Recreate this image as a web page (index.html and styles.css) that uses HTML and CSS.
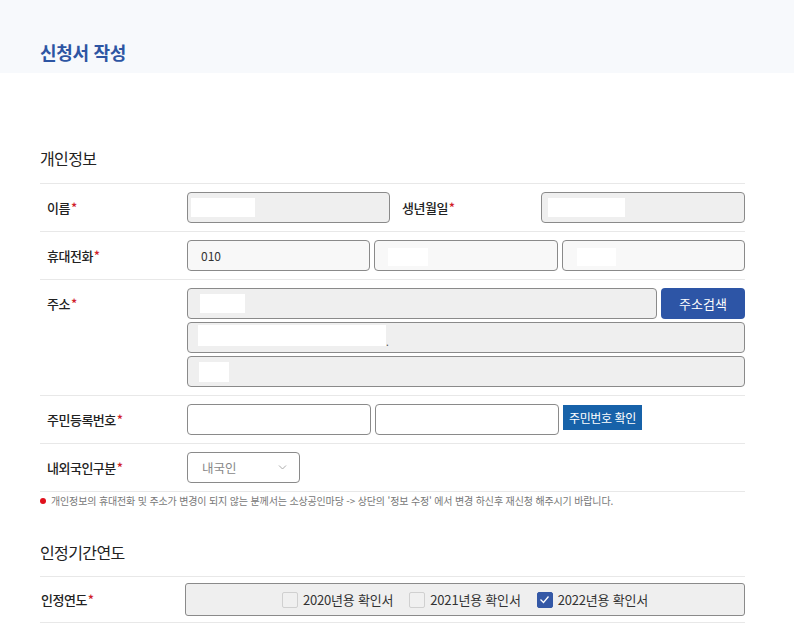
FILE: index.html
```html
<!DOCTYPE html>
<html lang="ko">
<head>
  <meta charset="UTF-8">
  <title>신청서 작성</title>
  <link rel="stylesheet" href="styles.css">
</head>
<body>

<div class="page-head">
  <h1 class="page-title">신청서 작성</h1>
</div>

<div class="content">
  <h2 class="section-title first">개인정보</h2>

  <div class="form-table">
    <div class="form-row">
      <div class="label">이름<span class="req">*</span></div>
      <div class="field">
        <div class="input disabled name-input"><span class="mask mask-name"></span></div>
        <div class="label label-inline">생년월일<span class="req">*</span></div>
        <div class="input disabled grow"><span class="mask mask-birth"></span></div>
      </div>
    </div>

    <div class="form-row">
      <div class="label">휴대전화<span class="req">*</span></div>
      <div class="field thirds">
        <div class="input light">010</div>
        <div class="input light"><span class="mask mask-phone2"></span></div>
        <div class="input light"><span class="mask mask-phone3"></span></div>
      </div>
    </div>

    <div class="form-row">
      <div class="label">주소<span class="req">*</span></div>
      <div class="field stack">
        <div class="addr-line">
          <div class="input disabled grow"><span class="mask mask-zip"></span></div>
          <button class="btn btn-addr">주소검색</button>
        </div>
        <div class="input disabled"><span class="mask mask-addr1"></span><span class="dot">.</span></div>
        <div class="input disabled"><span class="mask mask-addr2"></span></div>
      </div>
    </div>

    <div class="form-row">
      <div class="label">주민등록번호<span class="req">*</span></div>
      <div class="field thirds top">
        <div class="input white"></div>
        <div class="input white"></div>
        <div class="btn-cell"><button class="btn btn-jumin">주민번호 확인</button></div>
      </div>
    </div>

    <div class="form-row">
      <div class="label">내외국인구분<span class="req">*</span></div>
      <div class="field">
        <div class="select">
          <span>내국인</span>
          <svg width="9" height="5" viewBox="0 0 9 5"><path d="M1 0.5l3.5 3.5 3.5-3.5" fill="none" stroke="#aaa" stroke-width="1"/></svg>
        </div>
      </div>
    </div>
  </div>

  <p class="notice"><span class="bullet"></span>개인정보의 휴대전화 및 주소가 변경이 되지 않는 분께서는 소상공인마당 -&gt; 상단의 '정보 수정' 에서 변경 하신후 재신청 해주시기 바랍니다.</p>

  <h2 class="section-title">인정기간연도</h2>

  <div class="form-table">
    <div class="form-row year-row">
      <div class="label label-year">인정연도<span class="req">*</span></div>
      <div class="year-box">
        <label class="check"><span class="box"></span>2020년용 확인서</label>
        <label class="check"><span class="box"></span>2021년용 확인서</label>
        <label class="check"><span class="box checked"><svg width="11" height="9" viewBox="0 0 11 9"><path d="M1.5 4.5l3 3 5-6" fill="none" stroke="#fff" stroke-width="1.3"/></svg></span>2022년용 확인서</label>
      </div>
    </div>
  </div>
</div>

</body>
</html>
```

FILE: styles.css
```css
body {
  margin: 0;
  font-family: "Noto Sans CJK KR", "Noto Sans", sans-serif;
  color: #222;
  background: #fff;
}

.page-head {
  background: #f7f9fc;
  height: 73px;
  padding: 0 40px;
  box-sizing: border-box;
}

.page-title {
  margin: 0;
  padding-top: 39px;
  font-size: 18px;
  line-height: 26px;
  font-weight: bold;
  color: #2d55a3;
  letter-spacing: -0.3px;
}

.content {
  width: 705px;
  padding: 0 0 0 40px;
}

.section-title {
  margin: 0 0 12px;
  font-size: 16px;
  line-height: 24px;
  font-weight: normal;
  letter-spacing: -0.6px;
  color: #222;
}

.section-title.first { padding-top: 73px; margin-bottom: 13px; }

.form-table { border-top: 1px solid #e8e8e8; }

.form-row {
  display: flex;
  border-bottom: 1px solid #e8e8e8;
  padding: 8px 0;
}

.label {
  width: 147px;
  flex: none;
  box-sizing: border-box;
  padding-left: 7px;
  font-size: 13px;
  line-height: 31px;
  font-weight: 500;
  letter-spacing: -0.5px;
  color: #222;
}

.req { color: #d0202a; margin-left: 1px; }

.field {
  flex: 1;
  display: flex;
  gap: 4px;
}

.field.stack { flex-direction: column; gap: 3px; }
.field.thirds > * { flex: 1 1 0; min-width: 0; }
.field.top { align-items: flex-start; }

.input {
  height: 31px;
  box-sizing: border-box;
  border: 1px solid #8a8a8a;
  border-radius: 4px;
  background: #efefef;
  font-size: 12px;
  line-height: 29px;
  padding-left: 13px;
  color: #333;
  position: relative;
}

.input.light { background: #f8f8f8; }
.input.white { background: #fff; padding-left: 0; }
.grow { flex: 1; }

.name-input { width: 203px; flex: none; }

.label-inline { width: 135px; padding-left: 0; margin-left: 8px; }

.mask {
  position: absolute;
  background: #fff;
}

.mask-name { left: 3px; top: 5px; width: 64px; height: 19px; }
.mask-birth { left: 6px; top: 5px; width: 77px; height: 19px; }
.mask-phone2 { left: 13px; top: 7px; width: 40px; height: 18px; }
.mask-phone3 { left: 14px; top: 7px; width: 39px; height: 18px; }
.mask-zip { left: 12px; top: 5px; width: 45px; height: 19px; }
.mask-addr1 { left: 10px; top: 2px; width: 188px; height: 21px; }
.mask-addr2 { left: 11px; top: 5px; width: 30px; height: 20px; }

.dot {
  position: absolute;
  left: 198px;
  top: 4px;
  font-size: 10px;
  color: #555;
}

.addr-line { display: flex; gap: 4px; }

.btn {
  border: none;
  color: #fff;
  font-family: inherit;
  cursor: pointer;
}

.btn-addr {
  width: 84px;
  height: 31px;
  background: #2d55a6;
  border-radius: 4px;
  font-size: 13px;
}

.btn-jumin {
  width: 79px;
  height: 25px;
  background: #1762a9;
  font-size: 12px;
  letter-spacing: -0.4px;
  padding: 0;
}

.select {
  width: 113px;
  height: 31px;
  box-sizing: border-box;
  border: 1px solid #8a8a8a;
  border-radius: 4px;
  display: flex;
  align-items: center;
  justify-content: space-between;
  padding: 0 12px 0 14px;
  font-size: 12.5px;
  color: #888;
}

.notice {
  margin: 2px 0 32px;
  font-size: 10px;
  line-height: 14px;
  color: #777;
  letter-spacing: -0.15px;
  display: flex;
  align-items: center;
}

.bullet {
  width: 6px;
  height: 6px;
  border-radius: 50%;
  background: #e0101c;
  margin-right: 5px;
  flex: none;
}

.year-row { padding: 6px 0 6px; }

.label-year { padding-left: 1px; line-height: 33px; }

.year-box {
  width: 560px;
  margin-left: -2px;
  height: 33px;
  box-sizing: border-box;
  border: 1px solid #8a8a8a;
  border-radius: 3px;
  background: #efefef;
  display: flex;
  justify-content: center;
  align-items: center;
  gap: 16px;
}

.check {
  display: flex;
  align-items: center;
  gap: 5px;
  font-size: 13px;
  color: #333;
  letter-spacing: -0.2px;
}

.box {
  width: 14px;
  height: 14px;
  border: 1px solid #d0d0d0;
  border-radius: 2px;
  background: #f0f0f0;
  display: flex;
  align-items: center;
  justify-content: center;
}

.box.checked { background: #3458a6; border-color: #3458a6; }
```
